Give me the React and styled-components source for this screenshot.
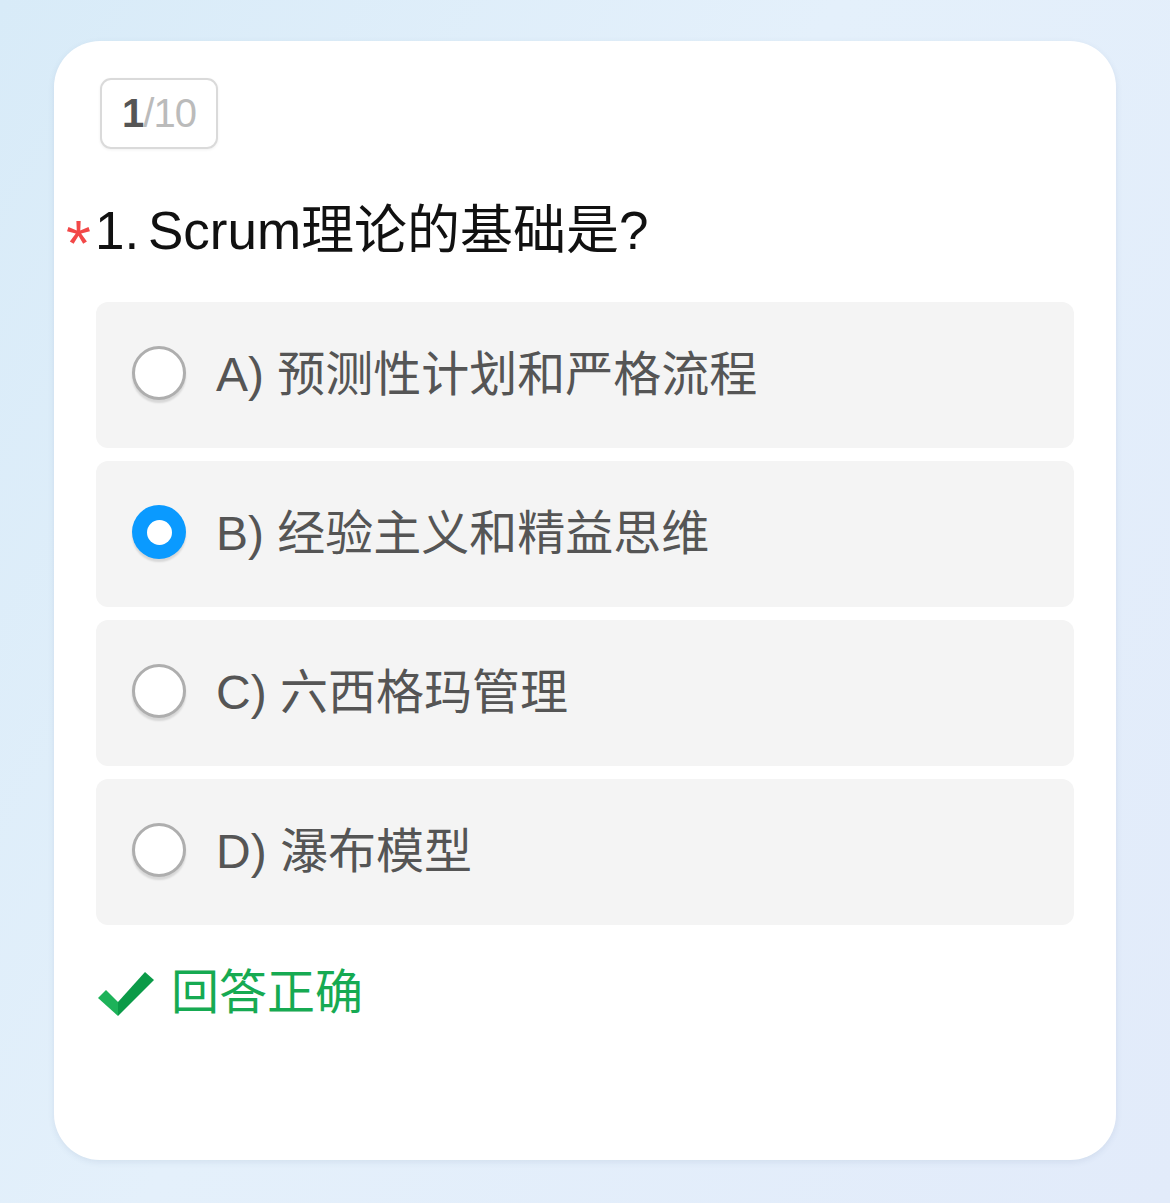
import React from 'react';
import styled, { createGlobalStyle } from 'styled-components';

const GlobalStyle = createGlobalStyle`
  html, body {
    margin: 0;
    padding: 0;
  }
  body {
    font-family: "Liberation Sans", "Noto Sans CJK SC", sans-serif;
    background: linear-gradient(120deg, #d8ebf8 0%, #e4f0fb 45%, #e2ebfa 100%);
    min-height: 1203px;
  }
`;

const Page = styled.div`
  padding: 41px 54px 43px 54px;
`;

const Card = styled.div`
  background: #fff;
  border-radius: 46px;
  height: 1119px;
  box-sizing: border-box;
  padding: 37px 42px 0 42px;
  box-shadow: 0 2px 6px rgba(60, 90, 130, 0.1);
`;

const Counter = styled.div`
  width: 118px;
  height: 71px;
  box-sizing: border-box;
  border: 2px solid #dadada;
  border-radius: 11px;
  margin-left: 4px;
  display: flex;
  align-items: center;
  justify-content: center;
  font-size: 40px;
  letter-spacing: -1px;
  color: #bbb;
  box-shadow: 0 1px 3px rgba(0, 0, 0, 0.06);
`;

const Current = styled.span`
  font-weight: bold;
  color: #555;
`;

const Question = styled.div`
  margin: 42px 0 0 -30px;
  font-size: 53px;
  line-height: 80px;
  word-spacing: -6px;
  color: #111;
  display: flex;
  align-items: center;
`;

const Required = styled.span`
  color: #f24848;
  font-size: 64px;
  width: 29px;
  transform: translateY(13px);
`;

const Options = styled.div`
  margin-top: 31px;
  display: flex;
  flex-direction: column;
  gap: 13px;
`;

const Option = styled.div`
  height: 146px;
  background: #f4f4f4;
  border-radius: 12px;
  display: flex;
  align-items: center;
  padding-left: 36px;
  gap: 30px;
`;

const Radio = styled.span`
  width: 54px;
  height: 54px;
  box-sizing: border-box;
  border-radius: 50%;
  flex: none;
  margin-top: -4px;
  display: flex;
  align-items: center;
  justify-content: center;
  background: ${p => (p.checked ? '#0a9aff' : '#fff')};
  border: ${p => (p.checked ? 'none' : '3px solid #aeaeae')};
  box-shadow: 0 3px 2px rgba(0, 0, 0, 0.12);
  &::after {
    content: '';
    display: ${p => (p.checked ? 'block' : 'none')};
    width: 25px;
    height: 25px;
    border-radius: 50%;
    background: #fff;
  }
`;

const Label = styled.span`
  font-size: 48px;
  color: #555;
  line-height: 1;
`;

const Result = styled.div`
  margin-top: 38px;
  display: flex;
  align-items: center;
  gap: 17px;
  font-size: 48px;
  line-height: 60px;
  color: #16aa52;
  padding-left: 2px;
`;

const options = [
  'A) 预测性计划和严格流程',
  'B) 经验主义和精益思维',
  'C) 六西格玛管理',
  'D) 瀑布模型',
];

function CheckMark() {
  return (
    <svg width="56" height="46" viewBox="0 0 56 46">
      <path d="M0 28 L8 20 L20 32 L20 46 Z" fill="#1db259" />
      <path d="M20 32 L47 2 L56 10 L20 46 Z" fill="#0b9a48" />
    </svg>
  );
}

export default function App() {
  const selected = 1;
  return (
    <Page>
      <GlobalStyle />
      <Card>
        <Counter>
          <Current>1</Current>/10
        </Counter>
        <Question>
          <Required>*</Required>
          1. Scrum理论的基础是?
        </Question>
        <Options>
          {options.map((text, i) => (
            <Option key={text}>
              <Radio checked={i === selected} />
              <Label>{text}</Label>
            </Option>
          ))}
        </Options>
        <Result>
          <CheckMark />
          回答正确
        </Result>
      </Card>
    </Page>
  );
}
